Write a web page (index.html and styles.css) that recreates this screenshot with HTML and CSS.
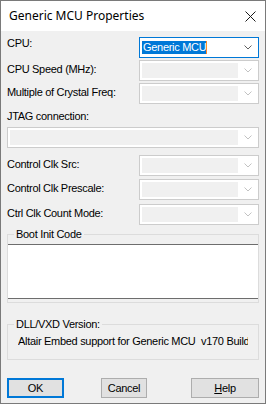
FILE: index.html
```html
<!DOCTYPE html>
<html>
<head>
<meta charset="utf-8">
<link rel="stylesheet" href="styles.css">
</head>
<body>
<div class="window">
  <div class="titlebar">
    <span class="title">Generic MCU Properties</span>
    <svg class="close" width="11" height="11" viewBox="0 0 11 11"><path d="M0.5 0.5 L10.5 10.5 M10.5 0.5 L0.5 10.5" stroke="#1a1a1a" stroke-width="1" fill="none"/></svg>
  </div>
  <div class="content">
    <div class="row r1">
      <span class="lbl lbl-top">CPU:</span>
      <div class="combo active">
        <div class="field"><span class="sel">Generic MCU</span></div>
        <div class="arrow"><svg width="8" height="5" viewBox="0 0 8 5"><path d="M0.5 0.5 L4 4 L7.5 0.5" stroke="#606060" fill="none"/></svg></div>
      </div>
    </div>
    <div class="row r2">
      <span class="lbl">CPU Speed (MHz):</span>
      <div class="combo"><div class="field"></div><div class="arrow"><svg width="8" height="5" viewBox="0 0 8 5"><path d="M0.5 0.5 L4 4 L7.5 0.5" stroke="#c2c2c2" fill="none"/></svg></div></div>
    </div>
    <div class="row r3">
      <span class="lbl">Multiple of Crystal Freq:</span>
      <div class="combo"><div class="field"></div><div class="arrow"><svg width="8" height="5" viewBox="0 0 8 5"><path d="M0.5 0.5 L4 4 L7.5 0.5" stroke="#c2c2c2" fill="none"/></svg></div></div>
    </div>
    <div class="jtag-lbl">JTAG connection:</div>
    <div class="combo wide"><div class="field"></div><div class="arrow"><svg width="8" height="5" viewBox="0 0 8 5"><path d="M0.5 0.5 L4 4 L7.5 0.5" stroke="#c2c2c2" fill="none"/></svg></div></div>
    <div class="row r4">
      <span class="lbl">Control Clk Src:</span>
      <div class="combo"><div class="field"></div><div class="arrow"><svg width="8" height="5" viewBox="0 0 8 5"><path d="M0.5 0.5 L4 4 L7.5 0.5" stroke="#c2c2c2" fill="none"/></svg></div></div>
    </div>
    <div class="row r5">
      <span class="lbl">Control Clk Prescale:</span>
      <div class="combo"><div class="field"></div><div class="arrow"><svg width="8" height="5" viewBox="0 0 8 5"><path d="M0.5 0.5 L4 4 L7.5 0.5" stroke="#c2c2c2" fill="none"/></svg></div></div>
    </div>
    <div class="row r6">
      <span class="lbl">Ctrl Clk Count Mode:</span>
      <div class="combo"><div class="field"></div><div class="arrow"><svg width="8" height="5" viewBox="0 0 8 5"><path d="M0.5 0.5 L4 4 L7.5 0.5" stroke="#c2c2c2" fill="none"/></svg></div></div>
    </div>
    <fieldset class="group boot">
      <legend>Boot Init Code</legend>
      <div class="editbox"></div>
    </fieldset>
    <fieldset class="group dll">
      <legend>DLL/VXD Version:</legend>
      <div class="version">Altair Embed support for Generic MCU&nbsp; v170 Build</div>
    </fieldset>
    <div class="buttons">
      <div class="btn ok">OK</div>
      <div class="btn cancel">Cancel</div>
      <div class="btn help"><u>H</u>elp</div>
    </div>
  </div>
</div>
</body>
</html>
```
FILE: styles.css
```css
* { box-sizing: border-box; }
html, body { margin: 0; padding: 0; }
body {
  width: 266px;
  height: 404px;
  overflow: hidden;
  background: #f0f0f0;
  font-family: "Liberation Sans", Arial, sans-serif;
  font-size: 11px;
  line-height: 13px;
  letter-spacing: -0.3px;
  color: #000;
}
.window {
  width: 266px;
  height: 404px;
  border: 1px solid #7a7a7a;
  background: #f0f0f0;
  display: flex;
  flex-direction: column;
}
.titlebar {
  height: 30px;
  flex: none;
  background: #fff;
  display: flex;
  align-items: center;
  padding-left: 8px;
  font-family: "Noto Sans", "Open Sans", sans-serif;
  font-size: 12px;
  line-height: 16px;
  letter-spacing: 0;
  color: #000;
}
.close {
  margin-left: auto;
  margin-right: 9px;
  display: block;
}
.content {
  padding: 6px 6px 0 6px;
  display: flex;
  flex-direction: column;
}
.row {
  display: flex;
  height: 21px;
}
.r2, .r3 { margin-top: 2px; }
.r4 { margin-top: 7px; }
.r5 { margin-top: 3px; }
.r6 { margin-top: 4px; }
.lbl {
  width: 132px;
  padding-top: 3px;
  white-space: nowrap;
}
.lbl-top { padding-top: 0; }
.jtag-lbl { margin-top: 6px; }
.combo {
  width: 120px;
  height: 21px;
  border: 1px solid #cccccc;
  background: #fff;
  display: flex;
  padding: 2px 0 2px 2px;
}
.combo.wide {
  width: 252px;
  margin-top: 4px;
}
.combo .field {
  flex: 1;
  background: #f0f0f0;
}
.combo .arrow {
  width: 20px;
  display: flex;
  align-items: center;
  justify-content: center;
}
.combo .arrow svg { display: block; }
.combo.active {
  border-color: #0078d7;
  padding: 0 0 0 2px;
}
.combo.active .field {
  background: #fff;
  display: flex;
  align-items: center;
}
.sel {
  background: #0078d7;
  color: #fff;
  padding-left: 1px;
  border-right: 1px solid #ff8728;
  white-space: nowrap;
}
.group {
  margin: 0;
  padding: 0;
  border: 1px solid #dcdcdc;
  min-width: 0;
}
.group legend {
  margin-left: 6px;
  padding: 0 2px;
  line-height: 13px;
}
.boot { margin-top: 3px; padding-bottom: 3px; }
.editbox {
  margin-top: 3px;
  height: 55px;
  background: #fff;
  border-top: 1px solid #6d6d6d;
  border-bottom: 1px solid #6d6d6d;
}
.dll { margin-top: 15px; padding-bottom: 11px; }
.version {
  margin: 4px 10px 0 10px;
  white-space: nowrap;
  overflow: hidden;
}
.buttons {
  margin-top: 18px;
  display: flex;
}
.btn {
  height: 20px;
  background: #e1e1e1;
  border: 1px solid #adadad;
  display: flex;
  align-items: center;
  justify-content: center;
}
.btn.ok { width: 57px; border: 2px solid #0078d7; }
.btn.cancel { width: 46px; margin-left: 37px; }
.btn.help { width: 68px; margin-left: 44px; }
.btn u { text-decoration-thickness: 1px; text-underline-offset: 1px; }
```
